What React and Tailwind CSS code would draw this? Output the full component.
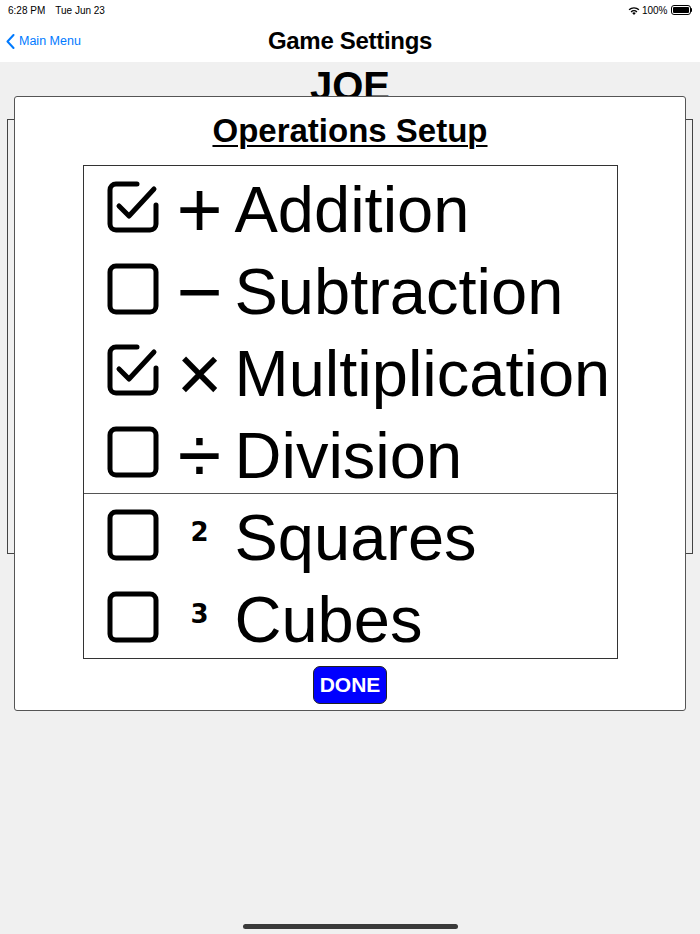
import React from 'react'

const ops = [
  { label: 'Addition', sym: '+', checked: true },
  { label: 'Subtraction', sym: '−', checked: false },
  { label: 'Multiplication', sym: '×', checked: true },
  { label: 'Division', sym: '÷', checked: false },
]

const powers = [
  { label: 'Squares', sym: '2', checked: false },
  { label: 'Cubes', sym: '3', checked: false },
]

function CheckBox({ checked }) {
  return (
    <svg width="52" height="52" viewBox="0 0 52 52" fill="none" stroke="black" strokeWidth="5" strokeLinecap="round" strokeLinejoin="round">
      {checked ? (
        <>
          <path d="M30 3 H9 a6 6 0 0 0 -6 6 V43 a6 6 0 0 0 6 6 H43 a6 6 0 0 0 6 -6 V24" />
          <path d="M12 25 L22 35 L47 8" />
        </>
      ) : (
        <rect x="3" y="3" width="46" height="46" rx="6" />
      )}
    </svg>
  )
}

function Row({ item, power }) {
  return (
    <div className="h-[81.75px] flex items-center pl-[23px]">
      <CheckBox checked={item.checked} />
      <div className="w-[76px] flex justify-center pl-[6px]">
        {power ? (
          <span className="text-[26px] font-black leading-none -mt-[6px]" style={{ fontFamily: '"DejaVu Sans", sans-serif' }}>{item.sym}</span>
        ) : (
          <span className="text-[79px] font-light leading-none pt-[6px]">{item.sym}</span>
        )}
      </div>
      <span className="text-[65px] leading-none pt-[6px] whitespace-nowrap">{item.label}</span>
    </div>
  )
}

export default function App() {
  return (
    <div className="relative w-[700px] h-[934px] bg-[#f0f0f0] overflow-hidden text-black" style={{ fontFamily: '"Liberation Sans", Arial, sans-serif' }}>
      {/* status bar */}
      <div className="h-[20px] bg-white flex items-center justify-between px-[8px] text-[10px]">
        <div className="flex gap-[10px]">
          <span>6:28 PM</span>
          <span>Tue Jun 23</span>
        </div>
        <div className="flex items-center gap-[2px]">
          <svg width="12" height="9" viewBox="0 0 12 9" fill="black">
            <path d="M6 9 L4.2 7 a2.6 2.6 0 0 1 3.6 0 Z" />
            <path d="M2.6 5.4 a4.9 4.9 0 0 1 6.8 0 L8.5 6.4 a3.6 3.6 0 0 0 -5 0 Z" />
            <path d="M0.6 3.3 a7.8 7.8 0 0 1 10.8 0 L10.4 4.3 a6.4 6.4 0 0 0 -8.8 0 Z" />
          </svg>
          <span>100%</span>
          <div className="flex items-center ml-[1px]">
            <div className="w-[20px] h-[10px] rounded-[3px] border border-black p-[1px]">
              <div className="w-full h-full bg-black rounded-[1px]" />
            </div>
            <div className="w-[1.5px] h-[4px] bg-black rounded-r" />
          </div>
        </div>
      </div>

      {/* nav bar */}
      <div className="h-[42px] bg-white relative flex items-center justify-center">
        <div className="absolute left-[6px] top-0 h-full flex items-center gap-[4px] text-[#007aff] text-[12.5px]">
          <svg width="9" height="15" viewBox="0 0 9 15" fill="none" stroke="#007aff" strokeWidth="2" strokeLinecap="round" strokeLinejoin="round">
            <path d="M7.5 1 L1.5 7.5 L7.5 14" />
          </svg>
          <span>Main Menu</span>
        </div>
        <span className="text-[24px] font-bold tracking-[-0.3px]">Game Settings</span>
      </div>

      {/* content */}
      <div className="flex justify-center pt-[4px]">
        <span className="text-[40px] font-bold leading-none">JOE</span>
      </div>
      <div className="mx-[7px] mt-[13px] h-[435px] border-[1.5px] border-[#444]" />

      {/* modal */}
      <div className="absolute left-[14px] top-[96px] w-[672px] h-[615px] bg-white border border-[#555] rounded-[3px] flex flex-col items-center">
        <div className="h-[68px] flex items-center justify-center">
          <span className="text-[33px] font-bold underline decoration-[2px] underline-offset-[3px]">Operations Setup</span>
        </div>
        <div className="w-[535px] border border-[#333]">
          {ops.map((o) => (
            <Row key={o.label} item={o} />
          ))}
          <div className="h-px bg-[#555]" />
          {powers.map((o) => (
            <Row key={o.label} item={o} power />
          ))}
        </div>
        <button className="mt-[7px] w-[74px] h-[38px] bg-[#0000ff] border border-[#222] rounded-[7px] text-white text-[21px] font-bold flex items-center justify-center">
          DONE
        </button>
      </div>

      {/* home indicator */}
      <div className="absolute left-[243px] top-[924px] w-[215px] h-[5px] rounded-full bg-[#3a3a3a]" />
    </div>
  )
}
